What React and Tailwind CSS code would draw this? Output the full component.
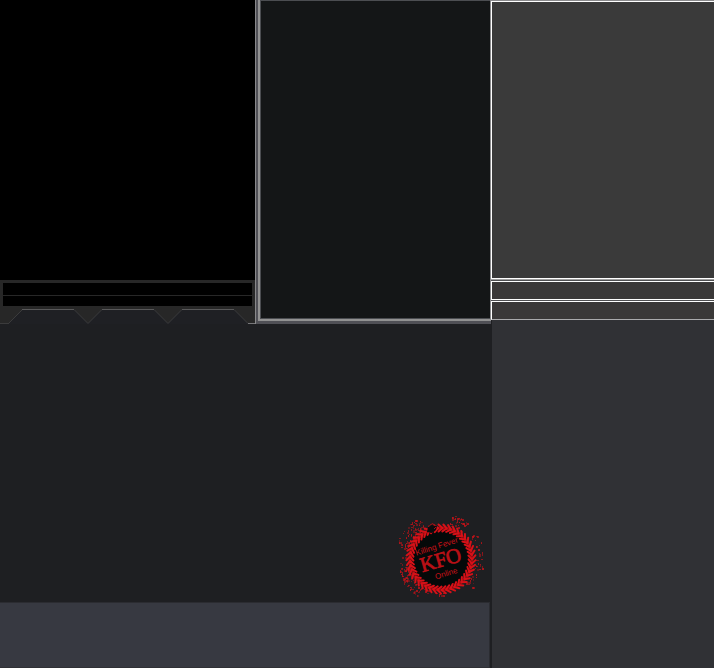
import React from "react";

const CX = 51;
const CY = 54;

function noise(n) {
  const v = Math.sin(n * 127.1 + 11.7) * 43758.5453;
  return v - Math.floor(v);
}

const leaves = Array.from({ length: 45 }, (_, i) => i * 8);

// angle ranges (degrees, clockwise from the right) where paint was thrown
const sprays = [
  [200, 242, 80, 34, 47],
  [283, 308, 38, 34, 46],
  [122, 168, 75, 34, 44],
  [85, 122, 14, 33, 37],
  [172, 200, 10, 34, 42],
  [-38, 45, 44, 34, 44],
];

const drops = sprays.flatMap(([from, to, count, near, far], s) =>
  Array.from({ length: count }, (_, i) => {
    const k = s * 400 + i * 7;
    const a = ((from + noise(k) * (to - from)) * Math.PI) / 180;
    const r = near + noise(k + 1) * (far - near);
    return {
      x: Math.round(CX + r * Math.cos(a)),
      y: Math.round(CY + r * Math.sin(a)),
      w: noise(k + 3) > 0.65 ? 2 : 1,
      h: noise(k + 5) > 0.45 ? 2 : 1,
      o: 0.35 + noise(k + 6) * 0.5,
    };
  })
);

function Stamp() {
  return (
    <svg width="100" height="100" viewBox="0 -3 100 100" role="img" aria-label="Killing Fever Online">
      {drops.map((d, i) => (
        <rect key={i} x={d.x} y={d.y} width={d.w} height={d.h} fill="#c51218" opacity={d.o} />
      ))}
      <circle cx={CX} cy={CY} r="31" fill="#050909" />
      <circle cx={CX} cy={CY} r="31" fill="none" stroke="#8f0d12" strokeWidth="3" />
      {leaves.map((a) => (
        <g key={a} transform={`rotate(${a} ${CX} ${CY})`}>
          <path d="M52.500 23 L48.500 19.500 M52.500 23 L48.500 26.500" stroke="#d61118" strokeWidth="2" strokeLinecap="round" fill="none" />
        </g>
      ))}
      <path d="M38 22 L42 20 L47 21 L46 25 L42 28 L37 27Z" fill="#0b0c0e" />
      <path d="M40 20 L43 18.500 L45 21 M44 24 L46 22" stroke="#a50e14" fill="none" />
      <g textAnchor="middle">
        <text transform="translate(47.500 44) rotate(-18)" fontSize="8" fill="#c91118" className="font-['Liberation_Sans',sans-serif]">Killing Fever</text>
        <text transform="translate(52.500 61.500) rotate(-16)" fontSize="21" fill="#b81016" stroke="#b81016" strokeWidth="0.700" className="font-['Liberation_Serif',serif]">KFO</text>
        <text transform="translate(57 71) rotate(-17)" fontSize="8" fill="#c91118" className="font-['Liberation_Sans',sans-serif]">Online</text>
      </g>
    </svg>
  );
}

function TabStrip() {
  return (
    <svg className="block w-full" height="18" viewBox="0 306 255 18" preserveAspectRatio="none" aria-hidden="true">
      <path
        d="M0 324V323.500H8.500L22.500 309.500H74L88 323.500L102 309.500H154L168 323.500L182 309.500H234L248 323.500H255V324Z"
        fill="#1f2024"
      />
      <path
        d="M8.500 323.500L22.500 309.500M74 309.500L88 323.500L102 309.500M154 309.500L168 323.500L182 309.500M234 309.500L248 323.500"
        fill="none"
        stroke="#3b3b3c"
      />
      <path d="M22 309.500H74M102 309.500H154M182 309.500H234" stroke="#59595a" />
      <path d="M0 323.500H9" stroke="#3b3b3c" />
      <path d="M248 323.500H255" stroke="#77777a" />
    </svg>
  );
}

export default function App() {
  return (
    <div className="flex min-h-screen bg-[#1e1f22]">
      <main className="flex min-w-0 flex-1 flex-col">
        <div className="flex h-[324px]">
          <section className="flex w-64 shrink-0 flex-col border-r border-[#88888a] bg-black">
            <div className="flex-1" />
            <div className="bg-[#272727]">
              <div className="border-[3px] border-b-0 border-[#272727]">
                <div className="h-3 bg-black" />
                <div className="mt-px h-[10px] bg-black" />
              </div>
              <TabStrip />
            </div>
          </section>
          <section className="flex min-w-0 flex-1 border-b-[3px] border-l-2 border-[#505056]">
            <div className="flex min-w-0 flex-1 border-b-2 border-l-2 border-[#929292]">
              <div className="min-w-0 flex-1 border-t border-b border-l border-[#4b4d51] bg-[#141617]" />
            </div>
          </section>
        </div>
        <section className="flex flex-1 items-end justify-end pr-px">
          <Stamp />
        </section>
        <footer className="mr-px h-[66px] border-t border-r border-b border-t-[#2b2c31] border-r-[#2b2c31] border-b-[#303136] bg-[#373941]" />
      </main>
      <aside className="flex w-[223px] shrink-0 flex-col">
        <div className="-ml-px border-t border-l border-[#8b8b8d] bg-[#505052]">
          <div className="h-[278px] border-y border-l border-white bg-[#3a3a3a]" />
          <div className="h-px bg-[#a1a1a1]" />
          <div className="mt-px h-[19px] border-y border-l border-white bg-[#3a3838]" />
          <div className="mt-px h-[19px] border-y border-l border-white border-b-[#aaaaac] bg-[#3a3838]" />
        </div>
        <div className="ml-px flex-1 bg-[#303135]" />
      </aside>
    </div>
  );
}
